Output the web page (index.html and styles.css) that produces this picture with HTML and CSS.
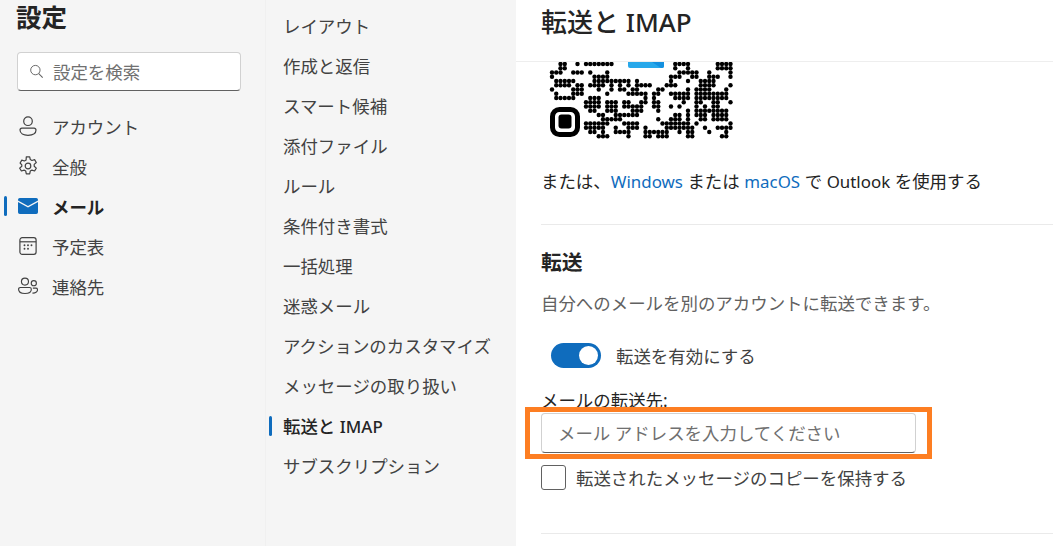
FILE: index.html
```html
<!DOCTYPE html>
<html lang="ja">
<head>
<meta charset="utf-8">
<title>設定</title>
<link rel="stylesheet" href="styles.css">
</head>
<body>
<div class="app">
  <aside class="nav-main">
    <h1 class="app-title">設定</h1>
    <div class="search">
      <svg class="search-icon" viewBox="0 0 16 16"><circle cx="6.8" cy="6.5" r="5" fill="none" stroke="#616161" stroke-width="1"/><path d="M10.4 10.2l4.2 4.3" stroke="#616161" stroke-width="1.1" fill="none"/></svg>
      <span class="search-text">設定を検索</span>
    </div>
    <ul class="main-list">
      <li class="main-item">
        <svg class="nav-icon" viewBox="0 0 20 20"><circle cx="10" cy="5.2" r="4.3" fill="none" stroke="#424242" stroke-width="1.2"/><path d="M3.900 12.200h12.200a1.900 1.900 0 0 1 1.900 1.900c0 3.400-3.500 5.200-8 5.200s-8-1.800-8-5.200a1.900 1.900 0 0 1 1.900-1.900z" fill="none" stroke="#424242" stroke-width="1.2"/></svg>
        <span>アカウント</span>
      </li>
      <li class="main-item">
        <svg class="nav-icon" viewBox="0 0 20 20"><path d="M8.300 .8h3.400l.6 2.800 1.600.9 2.700-.9 1.700 2.900-2.100 1.900v1.800l2.100 1.900-1.700 2.900-2.700-.9-1.600.9-.6 2.800H8.300l-.6-2.800-1.600-.9-2.700.9-1.700-2.900 2.100-1.900V8.900L2.100 7l1.700-2.900 2.700.9 1.600-.9z" fill="none" stroke="#424242" stroke-width="1.200" stroke-linejoin="round"/><circle cx="10" cy="10" r="2.800" fill="none" stroke="#424242" stroke-width="1.200"/></svg>
        <span>全般</span>
      </li>
      <li class="main-item is-active">
        <svg class="nav-icon" viewBox="0 0 20 20"><path d="M0 3.800a1.800 1.800 0 0 1 1.800-1.800h16.400a1.800 1.800 0 0 1 1.800 1.800v.6l-10 5.600-10-5.600z" fill="#0f6cbd"/><path d="M0 6l10 5.600L20 6v10.200a1.800 1.800 0 0 1-1.800 1.800H1.800A1.800 1.800 0 0 1 0 16.200z" fill="#0f6cbd"/></svg>
        <span>メール</span>
      </li>
      <li class="main-item">
        <svg class="nav-icon" viewBox="0 0 20 20"><rect x="1.900" y="1.700" width="16.200" height="16.600" rx="2.300" fill="none" stroke="#424242" stroke-width="1.200"/><path d="M1.900 5.800h16.200" stroke="#424242" stroke-width="1.200"/><g fill="#424242"><circle cx="6.500" cy="9.300" r=".95"/><circle cx="10" cy="9.300" r=".95"/><circle cx="13.500" cy="9.300" r=".95"/><circle cx="6.500" cy="12.800" r=".95"/><circle cx="10" cy="12.800" r=".95"/></g></svg>
        <span>予定表</span>
      </li>
      <li class="main-item">
        <svg class="nav-icon" viewBox="0 0 21 20"><circle cx="7.300" cy="5.400" r="3.700" fill="none" stroke="#424242" stroke-width="1.200"/><path d="M2.400 11.600h9.800a1.800 1.800 0 0 1 1.800 1.800c0 3-3 4.500-6.700 4.500s-6.700-1.500-6.700-4.500a1.800 1.800 0 0 1 1.800-1.800z" fill="none" stroke="#424242" stroke-width="1.200"/><circle cx="16.600" cy="7" r="2.700" fill="none" stroke="#424242" stroke-width="1.200"/><path d="M15.600 12.200h3.200a1.700 1.700 0 0 1 1.700 1.700c0 2.400-2.300 3.700-5.400 3.500" fill="none" stroke="#424242" stroke-width="1.200"/></svg>
        <span>連絡先</span>
      </li>
    </ul>
  </aside>

  <nav class="nav-sub">
    <a class="sub-item">レイアウト</a>
    <a class="sub-item">作成と返信</a>
    <a class="sub-item">スマート候補</a>
    <a class="sub-item">添付ファイル</a>
    <a class="sub-item">ルール</a>
    <a class="sub-item">条件付き書式</a>
    <a class="sub-item">一括処理</a>
    <a class="sub-item">迷惑メール</a>
    <a class="sub-item">アクションのカスタマイズ</a>
    <a class="sub-item">メッセージの取り扱い</a>
    <a class="sub-item is-active">転送と <span class="latin">IMAP</span></a>
    <a class="sub-item">サブスクリプション</a>
  </nav>

  <main class="pane">
    <header class="pane-header"><h2 class="pane-title">転送と IMAP</h2></header>
    <div class="pane-body">
      <svg class="qr" id="qr" viewBox="0 0 190 80" width="190" height="80">
        <path d="M79 0h36v4a2 2 0 0 1-2 2H81a2 2 0 0 1-2-2z" fill="#28a8ea"/>
        <path d="M103 0h12v4a2 2 0 0 1-2 2h-1z" fill="#1490df"/>
        <rect x="3.500" y="47.500" width="25" height="25" rx="7" fill="none" stroke="#000" stroke-width="5"/>
        <rect x="9.500" y="52.500" width="13" height="14" rx="3" fill="#000"/>
      </svg>
      <p class="alt-line">または、<a class="link latin">Windows</a> または <a class="link latin">macOS</a> で <span class="latin">Outlook</span> を使用する</p>
      <hr class="rule first-rule">
      <h3 class="section-title">転送</h3>
      <p class="section-desc">自分へのメールを別のアカウントに転送できます。</p>
      <div class="toggle-row">
        <span class="toggle"><span class="knob"></span></span>
        <span>転送を有効にする</span>
      </div>
      <div class="field-label">メールの転送先:</div>
      <div class="field">
        <div class="email-input">メール アドレスを入力してください</div>
        <div class="callout"></div>
      </div>
      <div class="check-row">
        <span class="checkbox"></span>
        <span>転送されたメッセージのコピーを保持する</span>
      </div>
      <hr class="rule last-rule">
    </div>
  </main>
</div>
<script src="qr.js"></script>
</body>
</html>
```
FILE: styles.css
```css
* { box-sizing: border-box; }
html, body { margin: 0; height: 546px; overflow: hidden; }
body {
  font-family: "Noto Sans", "Noto Sans CJK JP", sans-serif;
  font-size: 17.45px;
  color: #424242;
  background: #fff;
}
.latin { font-size: 16.9px; line-height: 1; }
.app { display: flex; height: 546px; }

.nav-main { width: 265px; flex: none; background: #f5f5f5; padding: 0 24px 0 16px; }
.app-title { margin: 0; font-size: 25.5px; line-height: 35px; font-weight: 700; color: #242424; }
.search {
  margin: 17px 0 0 1px; height: 39px; display: flex; align-items: center; gap: 9px; padding-left: 11px;
  background: #fff; border: 1px solid #d1d1d1; border-bottom-color: #616161; border-radius: 4px;
  color: #707070;
}
.search-icon { width: 15px; height: 15px; flex: none; }
.search-text { line-height: 24px; }
.main-list { list-style: none; margin: 15px 0 0; padding: 0; }
.main-item { position: relative; height: 40px; display: flex; align-items: center; gap: 14px; padding-left: 2px; }
.nav-icon { width: 20px; height: 20px; flex: none; }
.main-item.is-active { font-weight: 700; color: #242424; }
.main-item.is-active::before {
  content: ""; position: absolute; left: -12px; top: 10px; width: 3px; height: 20px; border-radius: 2px; background: #0f6cbd;
}

.nav-sub {
  width: 251px; flex: none; background: #f5f5f5; border-left: 1px solid #f0f0f0;
  padding: 6px 0 0 17px; display: flex; flex-direction: column;
}
.sub-item { position: relative; height: 40px; line-height: 40px; white-space: nowrap; }
.sub-item.is-active { color: #242424; font-weight: 500; }
.sub-item.is-active::before {
  content: ""; position: absolute; left: -14px; top: 10px; width: 3px; height: 20px; border-radius: 2px; background: #0f6cbd;
}

.pane { flex: 1; min-width: 0; background: #fff; overflow: hidden; }
.pane-header { height: 62px; padding-left: 25px; border-bottom: 1px solid #eee; }
.pane-title { margin: 0; font-size: 26px; line-height: 45px; font-weight: 500; color: #242424; }
.pane-body { padding-left: 25px; color: #242424; }
.qr { display: block; margin-left: 8px; }
.alt-line { margin: 27px 0 0; line-height: 24px; }
.link { color: #0f6cbd; }
.rule { margin: 0; border: 0; border-top: 1px solid #eaeaea; }
.first-rule { margin-top: 31px; }
.section-title { margin: 23px 0 0; font-size: 20.8px; line-height: 28px; font-weight: 700; color: #242424; }
.section-desc { margin: 15px 0 0; line-height: 24px; color: #616161; }
.toggle-row { margin: 28px 0 0 10px; display: flex; align-items: center; gap: 15px; height: 25px; color: #424242; }
.toggle { width: 50px; height: 25px; border-radius: 13px; background: #0f6cbd; display: flex; align-items: center; justify-content: flex-end; padding-right: 3px; }
.knob { width: 19px; height: 19px; border-radius: 50%; background: #fff; }
.field-label { margin-top: 20px; line-height: 24px; }
.field { position: relative; margin-top: 1px; width: 375px; }
.email-input {
  height: 40px; line-height: 38px; padding-left: 16px; background: #fff; color: #707070;
  border: 1px solid #d1d1d1; border-bottom-color: #616161; border-radius: 4px;
}
.callout { position: absolute; left: -16px; top: -6px; width: 407px; height: 52px; border: 5px solid #fd7e22; }
.check-row { margin-top: 12px; display: flex; align-items: center; gap: 10px; height: 25px; color: #424242; }
.checkbox { width: 25px; height: 25px; border: 1px solid #616161; border-radius: 3px; background: #fff; flex: none; }
.last-rule { margin-top: 43px; }
```
FILE: qr.js
```js
var rows = [
"2-3 6 8-14 29-32 39-42",
"2-3 29 32 39-42",
"0-2 5-7 9 13 30-34 37 42",
"0 10 11-13 28-30 33-34 37-39 42",
"1-5 10-14 15-18 20 28 32 35-38",
"1-3 4 6-7 9-12 14 16 18 20-23 27-29 35-38 42",
"0 5-7 11 14 16-17 19-20 25-26 32 34-37 41",
"1 5-7 13 18-22 24-25 28-32 34-41",
"1-5 9-11 22 24 29-32 34-41",
"8-11 13-15 17-18 21-22 24-25 31 34-35 38-39 42",
"8-11 13-15 17-21 24-25 28 30 34 36 38-39",
"9-10 13-15 19-21 25 32 34-37 38-41",
"11 12 15-20 29-30 32 34-36 38-41",
"12-16 25 28-30 32 35-36 38-41",
"8-13 17-20 26-32 34 42",
"8-12 15 18-20 22 27-33 36 39-42",
"9-10 12 15-18 22-23 24-27 30 32-33 37 41",
"11-13 18 22-23 25-27 32-33 40-41"
];
var svg = document.getElementById("qr");
rows.forEach(function (row, r) {
  row.split(" ").forEach(function (span) {
    var ends = span.split("-").map(Number);
    var last = ends.length > 1 ? ends[1] : ends[0];
    for (var c = ends[0]; c <= last; c++) {
      var dot = document.createElementNS("http://www.w3.org/2000/svg", "circle");
      dot.setAttribute("cx", 3 + c * 4.25);
      dot.setAttribute("cy", 2 + r * 4.25);
      dot.setAttribute("r", 2.2);
      svg.appendChild(dot);
    }
  });
});
```
